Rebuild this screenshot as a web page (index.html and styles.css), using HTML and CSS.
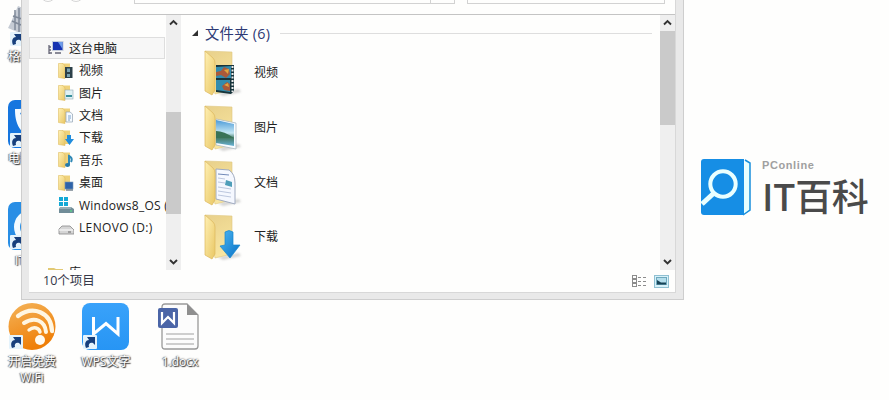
FILE: index.html
```html
<!DOCTYPE html>
<html lang="zh-CN">
<head>
<meta charset="utf-8">
<title>这台电脑</title>
<link rel="stylesheet" href="styles.css">
</head>
<body>
<svg class="defs" aria-hidden="true">
  <defs>
    <linearGradient id="gold" x2="1" y2="1"><stop stop-color="#fff0b4"/><stop offset="1" stop-color="#e9c764"/></linearGradient>
    <linearGradient id="inside" x2="0.3" y2="1"><stop stop-color="#e8d08a"/><stop offset="1" stop-color="#f8e5a0"/></linearGradient>
    <linearGradient id="orange" x2="0.4" y2="1"><stop stop-color="#f4b45a"/><stop offset="1" stop-color="#ef7f08"/></linearGradient>
    <linearGradient id="wps" x2="0" y2="1"><stop stop-color="#39a2fa"/><stop offset="1" stop-color="#2795f4"/></linearGradient>
    <linearGradient id="sky" x2="0" y2="1"><stop stop-color="#4d9bd8"/><stop offset=".5" stop-color="#c5e7f4"/><stop offset=".7" stop-color="#457b67"/><stop offset="1" stop-color="#68b3d7"/></linearGradient>
    <linearGradient id="down" x2="1" y2="1"><stop stop-color="#4db6f2"/><stop offset="1" stop-color="#0872c6"/></linearGradient>
    <filter id="soft" x="-50%" y="-50%" width="200%" height="200%"><feGaussianBlur stdDeviation="1.2"/></filter>
  </defs>
  <symbol id="shortcut" viewBox="0 0 14 14">
    <rect width="14" height="14" rx="1" fill="#e4f3fc"/>
    <path d="M3 13C1 8 3 5 6 5L4 2H12V10L10 8C7 7 5 9 6 12Z" fill="#173f7c"/>
  </symbol>
  <symbol id="folder-back" viewBox="0 0 40 48">
    <path d="M14 43L35 39L37 42L19 46Z" fill="#777" opacity=".3" filter="url(#soft)"/>
    <path d="M1 1L28 2V40L11 44Z" fill="url(#inside)" stroke="#dfc782" stroke-width=".6"/>
  </symbol>
  <symbol id="folder-front" viewBox="0 0 40 48">
    <path d="M1 1L9 8Q11 10 11 13V40L8 45L1 41Z" fill="url(#gold)" stroke="#dcb75d" stroke-width=".7"/>
  </symbol>
  <symbol id="small-folder" viewBox="0 0 16 16">
    <path d="M4 .5H12V14H4Z" fill="#efd27b"/>
    <path d="M.5 .5H5L7 3V15.5L.5 14.5Z" fill="url(#gold)" stroke="#dfbd63" stroke-width=".6"/>
  </symbol>
</svg>

<main class="desktop">
  <div class="shortcut item-a">
    <svg class="app" viewBox="0 0 48 48"><path d="M10 0L15 2L14 28L0 22L3 16Z" fill="#c5cbd4"/><path d="M7 4V24M11 2V26M4 15L13 19M5 10L14 13" stroke="#7f8998" stroke-width="1.5"/><use href="#shortcut" x="2" y="26" width="14" height="14"/></svg>
    <span>格式工厂</span>
  </div>
  <div class="shortcut item-b">
    <svg class="app" viewBox="0 0 48 48"><rect width="48" height="48" rx="7" fill="#1676df"/><path d="M24 4C18 9 13 9 7 9C7 22 10 31 24 39Z" fill="#f5fbff"/><path d="M24 9L12 13L18 25Z" fill="#2680dc"/><use href="#shortcut" x="2" y="33" width="14" height="14"/></svg>
    <span>电脑管家</span>
  </div>
  <div class="shortcut item-c">
    <svg class="app" viewBox="0 0 48 48"><rect width="48" height="48" rx="7" fill="#288ee5"/><circle cx="23" cy="25" r="14" fill="none" stroke="#f3fbff" stroke-width="6"/><use href="#shortcut" x="2" y="33" width="14" height="14"/></svg>
    <span>IT百科</span>
  </div>
  <div class="shortcut wifi">
    <svg class="app" viewBox="0 0 48 48"><circle cx="24" cy="23.5" r="23.5" fill="url(#orange)"/><g fill="none" stroke="#fff6e2" stroke-linecap="round"><path d="M10 13C25 2 43 9 44 28" stroke-width="4.3"/><path d="M16 20C27 13 37 18 38 29" stroke-width="4"/><path d="M21 27C26 23 31 25 32 29" stroke-width="3.4"/></g><circle cx="32" cy="37" r="5" fill="#fffaf0"/><use href="#shortcut" x="1" y="32" width="14" height="14"/></svg>
    <span>开启免费<br>WiFi</span>
  </div>
  <div class="shortcut wps">
    <svg class="app" viewBox="0 0 48 48"><rect width="47" height="47" rx="8" fill="url(#wps)"/><path d="M11.5 14V31L24 20.5L36 31V14" fill="none" stroke="#fff" stroke-width="3"/><use href="#shortcut" x="1" y="32" width="14" height="14"/></svg>
    <span>WPS文字</span>
  </div>
  <div class="shortcut doc">
    <svg class="app" viewBox="0 0 48 48"><path d="M6 4Q6 1 9 1H31L42 12V43Q42 46 39 46H9Q6 46 6 43Z" fill="#fcfcfc" stroke="#999" stroke-width="1.3"/><path d="M31 1V12H42Z" fill="#8f8f8f"/><path d="M10 31H38M10 36H38M10 41H38" stroke="#a0a0a0" stroke-width="1.2"/><rect x="2" y="5" width="20" height="20" rx="2" fill="#4b65a7"/><path d="M6 9V20L12 14L18 20V9" fill="none" stroke="#fff" stroke-width="2.2"/></svg>
    <span>1.docx</span>
  </div>

  <div class="brand">
    <svg viewBox="0 0 58 60">
      <path d="M45 2L50 5V52L43 57" fill="#e7ffff" stroke="#198fdc" stroke-width="1.5"/>
      <path d="M4 1H44V57H4Q1 57 1 54V4Q1 1 4 1Z" fill="#168ee5"/>
      <circle cx="23" cy="26" r="12.7" fill="none" stroke="#eaffff" stroke-width="4"/>
      <path d="M14 35L2 46" stroke="#eaffff" stroke-width="5"/>
    </svg>
    <div class="brand-name"><span class="brand-small">PConline</span><span class="brand-big">IT百科</span></div>
  </div>

  <section class="window">
    <div class="client">
      <header class="toolbar"><i class="nav back"></i><i class="nav forward"></i><i class="address"></i><i class="search"></i></header>
      <div class="panes">
        <nav class="tree">
          <div class="branch root"><svg viewBox="0 0 16 16"><rect x="4" y="1" width="11.5" height="10" fill="#c6cede"/><rect x="5" y="2" width="9.5" height="8" fill="#1733b1"/><path d="M10 2H14.5V9Z" fill="#6d9cea"/><path d="M1 5V14M1 7H3M1 10H3M1 13H4M7 13H13" stroke="#667" stroke-width="1.3"/></svg><span>这台电脑</span></div>
          <div class="branch"><svg viewBox="0 0 16 16"><use href="#small-folder"/><rect x="7" y="4" width="7.5" height="11" fill="#2c4049"/><path d="M9 5.5H12V9H9ZM9 11H12V14H9Z" fill="#79a3b2"/></svg><span>视频</span></div>
          <div class="branch"><svg viewBox="0 0 16 16"><use href="#small-folder"/><rect x="7" y="5" width="8" height="9" fill="#e0f1f4" stroke="#96abb4" stroke-width=".6"/><path d="M8 10H14V12H8Z" fill="#388f9b"/></svg><span>图片</span></div>
          <div class="branch"><svg viewBox="0 0 16 16"><use href="#small-folder"/><path d="M8 4H12L14.5 6V14H8Z" fill="#f5faff" stroke="#91a2b1" stroke-width=".7"/><path d="M10 8H13M10 10H13M10 12H12" stroke="#7ba2cb"/></svg><span>文档</span></div>
          <div class="branch"><svg viewBox="0 0 16 16"><use href="#small-folder"/><path d="M9 5H13V9H16L11.5 15L7 9H9Z" fill="#218ddd"/></svg><span>下载</span></div>
          <div class="branch"><svg viewBox="0 0 16 16"><use href="#small-folder"/><path d="M11 13V4Q15 6 13 10" fill="none" stroke="#3089b6" stroke-width="2"/><ellipse cx="9.5" cy="13" rx="2.5" ry="2" fill="#267aa9"/></svg><span>音乐</span></div>
          <div class="branch"><svg viewBox="0 0 16 16"><use href="#small-folder"/><rect x="7" y="7" width="8" height="7" fill="#2e63a9" stroke="#7896b8" stroke-width=".6"/><path d="M8 15H15" stroke="#35485d"/></svg><span>桌面</span></div>
          <div class="branch"><svg viewBox="0 0 16 16"><path d="M1 0H5V4H1ZM6 0H10V4H6ZM1 5H5V9H1ZM6 5H10V9H6Z" fill="#13a9d6"/><path d="M2 10H13L16 12V16H1V12Z" fill="#718d98"/><path d="M2 11H13" stroke="#bdced3"/><path d="M12 14H14" stroke="#50f082"/></svg><span class="os">Windows8_OS (</span></div>
          <div class="branch"><svg viewBox="0 0 16 16"><path d="M4 6H12L16 10V14H1V9Z" fill="#d5d5d5" stroke="#888" stroke-width=".8"/><path d="M1 10H15" stroke="#fff"/><path d="M10 12H13" stroke="#666"/></svg><span class="drive">LENOVO (D:)</span></div>
          <div class="branch library"><svg viewBox="0 0 16 16"><path d="M0 3H6L8 4H15V14H0Z" fill="#e2c974"/></svg><span>库</span></div>
        </nav>
        <div class="scroll left-scroll"><svg viewBox="0 0 15 15"><path d="M4 9L7.5 5.5L11 9"/></svg><i></i><svg viewBox="0 0 15 15"><path d="M4 5.5L7.5 9L11 5.5"/></svg></div>
        <div class="content">
          <h1><svg viewBox="0 0 7 7"><path d="M6 0V6H0Z" fill="#303030"/></svg><span>文件夹 (6)</span><i></i></h1>
          <div class="folder"><svg viewBox="0 0 40 48"><use href="#folder-back"/><path d="M12 15L30 15V41L27 44L12 42Z" fill="#17343b"/><path d="M12 17L27 16V28L12 28ZM12 30L26 30V42L12 40Z" fill="#328cae"/><path d="M12 22L17 21L20 17L25 19L26 24L22 28L17 25L12 26ZM18 36L23 32L26 34V41L20 40Z" fill="#a9593a"/><path d="M20 20L25 19L24 24ZM20 35L24 33L25 37Z" fill="#e0a63e"/><path d="M28.5 16V42" stroke="#eee" stroke-width="2" stroke-dasharray="2 1.5"/><use href="#folder-front"/></svg><span>视频</span></div>
          <div class="folder"><svg viewBox="0 0 40 48"><use href="#folder-back"/><path d="M12 14L32 18V44L12 40Z" fill="#f8fcff" stroke="#a5b3bc" stroke-width=".7"/><path d="M12 15L30 19V41L12 38Z" fill="url(#sky)"/><path d="M12 26Q20 26 30 33L12 33Z" fill="#397257"/><use href="#folder-front"/></svg><span>图片</span></div>
          <div class="folder"><svg viewBox="0 0 40 48"><use href="#folder-back"/><path d="M12 9L25 10Q31 14 31 23V44L12 39Z" fill="#f5f8ff" stroke="#a0abc0" stroke-width="1"/><path d="M14 14L25 15" stroke="#7189b8"/><path d="M14 18L21 19M14 22L21 23M14 27L27 29M14 31L27 33M14 35L27 37" stroke="#bcc7de"/><path d="M22 20L28 22V27L21 25Z" fill="#4f9eb9"/><use href="#folder-front"/></svg><span>文档</span></div>
          <div class="folder"><svg viewBox="0 0 40 48"><use href="#folder-back"/><use href="#folder-front"/><path d="M21 18Q25 15 29 18V31H36L26 44L16 32L21 31Z" fill="url(#down)" stroke="#1788cf" stroke-width=".7"/></svg><span>下载</span></div>
        </div>
        <div class="scroll right-scroll"><svg viewBox="0 0 15 15"><path d="M4 9L7.5 5.5L11 9"/></svg><i></i><svg viewBox="0 0 15 15"><path d="M4 5.5L7.5 9L11 5.5"/></svg></div>
      </div>
      <footer><span>10个项目</span>
        <svg class="views" viewBox="0 0 38 15"><g fill="none" stroke="#8c8c8c"><rect x="1.5" y="1.5" width="4" height="3"/><rect x="1.5" y="5.5" width="4" height="3"/><rect x="1.5" y="9.5" width="4" height="3"/><path d="M7 3.5H10M12 3.5H15M7 7.5H10M12 7.5H15M7 11.5H10M12 11.5H15"/></g><rect x="23.5" y="1.5" width="14" height="12" fill="#d7f1fa" stroke="#8fc0d2"/><rect x="25.5" y="3.5" width="10" height="7" fill="#b4deec" stroke="#6fa9bd"/><path d="M26 6L30 8.5H35V10.5H26Z" fill="#174458"/></svg>
      </footer>
    </div>
  </section>
</main>
</body>
</html>
```
FILE: styles.css
```css
* { box-sizing: border-box; }
body {
  margin: 0;
  background: #fefefd;
  color: #222;
  font: 12px/16px "Open Sans", "Noto Sans CJK SC", sans-serif;
}
.defs { position: absolute; width: 0; height: 0; }
.desktop { position: relative; width: 889px; height: 400px; overflow: hidden; }
svg { display: block; flex: none; }

.window {
  position: absolute;
  left: 21px;
  top: 0;
  width: 663px;
  height: 300px;
  padding: 0 7px 6px;
  background: #e9e9e9;
  border: 1px solid #cecece;
  border-top: 0;
}
.client {
  display: flex;
  flex-direction: column;
  width: 647px;
  height: 293px;
  background: #fefefd;
  border-bottom: 1px solid #d8d8d8;
  border-right: 1px solid #d8d8d8;
}
.toolbar { display: flex; height: 15px; border-bottom: 1px solid #c4c4c4; overflow: hidden; }
.toolbar i { display: block; }
.nav { width: 16px; height: 16px; margin-top: -14px; border: 1px solid #d5d5d5; border-radius: 50%; }
.back { margin-left: 11px; }
.forward { margin-left: 12px; }
.address { width: 321px; height: 4px; margin-left: 50px; border: 1px solid #d2d2d2; border-top: 0; background: linear-gradient(90deg, transparent 295px, #d2d2d2 295px, #d2d2d2 296px, transparent 296px); }
.search { width: 198px; height: 4px; margin-left: 12px; border: 1px solid #d2d2d2; border-top: 0; }
.panes { display: flex; height: 255px; }
.tree { width: 137px; padding-top: 22px; overflow: hidden; }
.branch { display: flex; align-items: center; height: 22.45px; padding-left: 29px; white-space: nowrap; }
.branch svg { width: 16px; height: 16px; margin-right: 5px; }
.branch span { padding-top: 1px; }
.branch.root { width: 136px; padding-left: 18px; background: #f7f7f7; border: 1px solid #dedede; }
.os { letter-spacing: .25px; }
.drive { letter-spacing: .35px; }
.library { align-items: flex-start; padding-left: 19px; padding-top: 26px; overflow: visible; }
.library span { padding-top: 0; }
.scroll { display: flex; flex-direction: column; background: #efefef; }
.scroll svg { width: 15px; height: 16px; fill: none; stroke: #333; stroke-width: 1.9; }
.scroll i { background: #cacaca; }
.left-scroll { width: 15px; }
.left-scroll i { height: 102px; margin-top: 81px; margin-bottom: 40px; }
.right-scroll { width: 15px; }
.right-scroll i { height: 94px; margin-bottom: 129px; }
.content { width: 479px; padding: 8px 0 0 11px; overflow: hidden; }
h1 { display: flex; align-items: center; height: 21px; margin: 0; color: #2d3974; font-size: 14.3px; font-weight: 400; line-height: 20px; }
h1 span { width: 67px; letter-spacing: .3px; white-space: nowrap; }
h1 svg { width: 7px; height: 7px; margin-right: 6px; }
h1 i { width: 372px; height: 1px; margin-left: 8px; background: #dedede; }
.folder { display: flex; height: 54.8px; padding: 6px 0 0 12px; }
.folder svg { width: 40px; height: 48px; }
.folder span { margin: 15px 0 0 10px; }
footer { display: flex; justify-content: space-between; height: 22px; padding: 3px 6px 0 14px; color: #353849; font-size: 12.5px; }
.views { width: 38px; height: 15px; margin-top: 1px; }

.shortcut { position: absolute; display: flex; flex-direction: column; align-items: center; width: 64px; text-align: center; line-height: 16px; color: #fff; text-shadow: 1px 1px 1px #333, 0 0 2px #444, -1px 0 1px #888; }
.shortcut .app { width: 48px; height: 48px; margin-bottom: 3px; }
.item-a { left: 0; top: 6px; }
.item-a .app { margin-bottom: -5px; }
.item-b { left: 0; top: 100px; }
.item-c { left: 0; top: 202px; }
.wifi { left: 0; top: 303px; }
.wps { left: 74px; top: 303px; }
.doc { left: 148px; top: 303px; }

.brand { position: absolute; left: 700px; top: 158px; display: flex; width: 176px; }
.brand > svg { width: 58px; height: 60px; }
.brand-name { display: flex; flex-direction: column; margin-left: 4px; }
.brand-small { height: 15px; font: bold 11px/15px "Liberation Sans", sans-serif; letter-spacing: .6px; color: #a0a0a0; }
.brand-big { font: 500 37px/44px "Noto Sans CJK SC", sans-serif; letter-spacing: -.4px; color: #4a4a4a; white-space: nowrap; }
```
